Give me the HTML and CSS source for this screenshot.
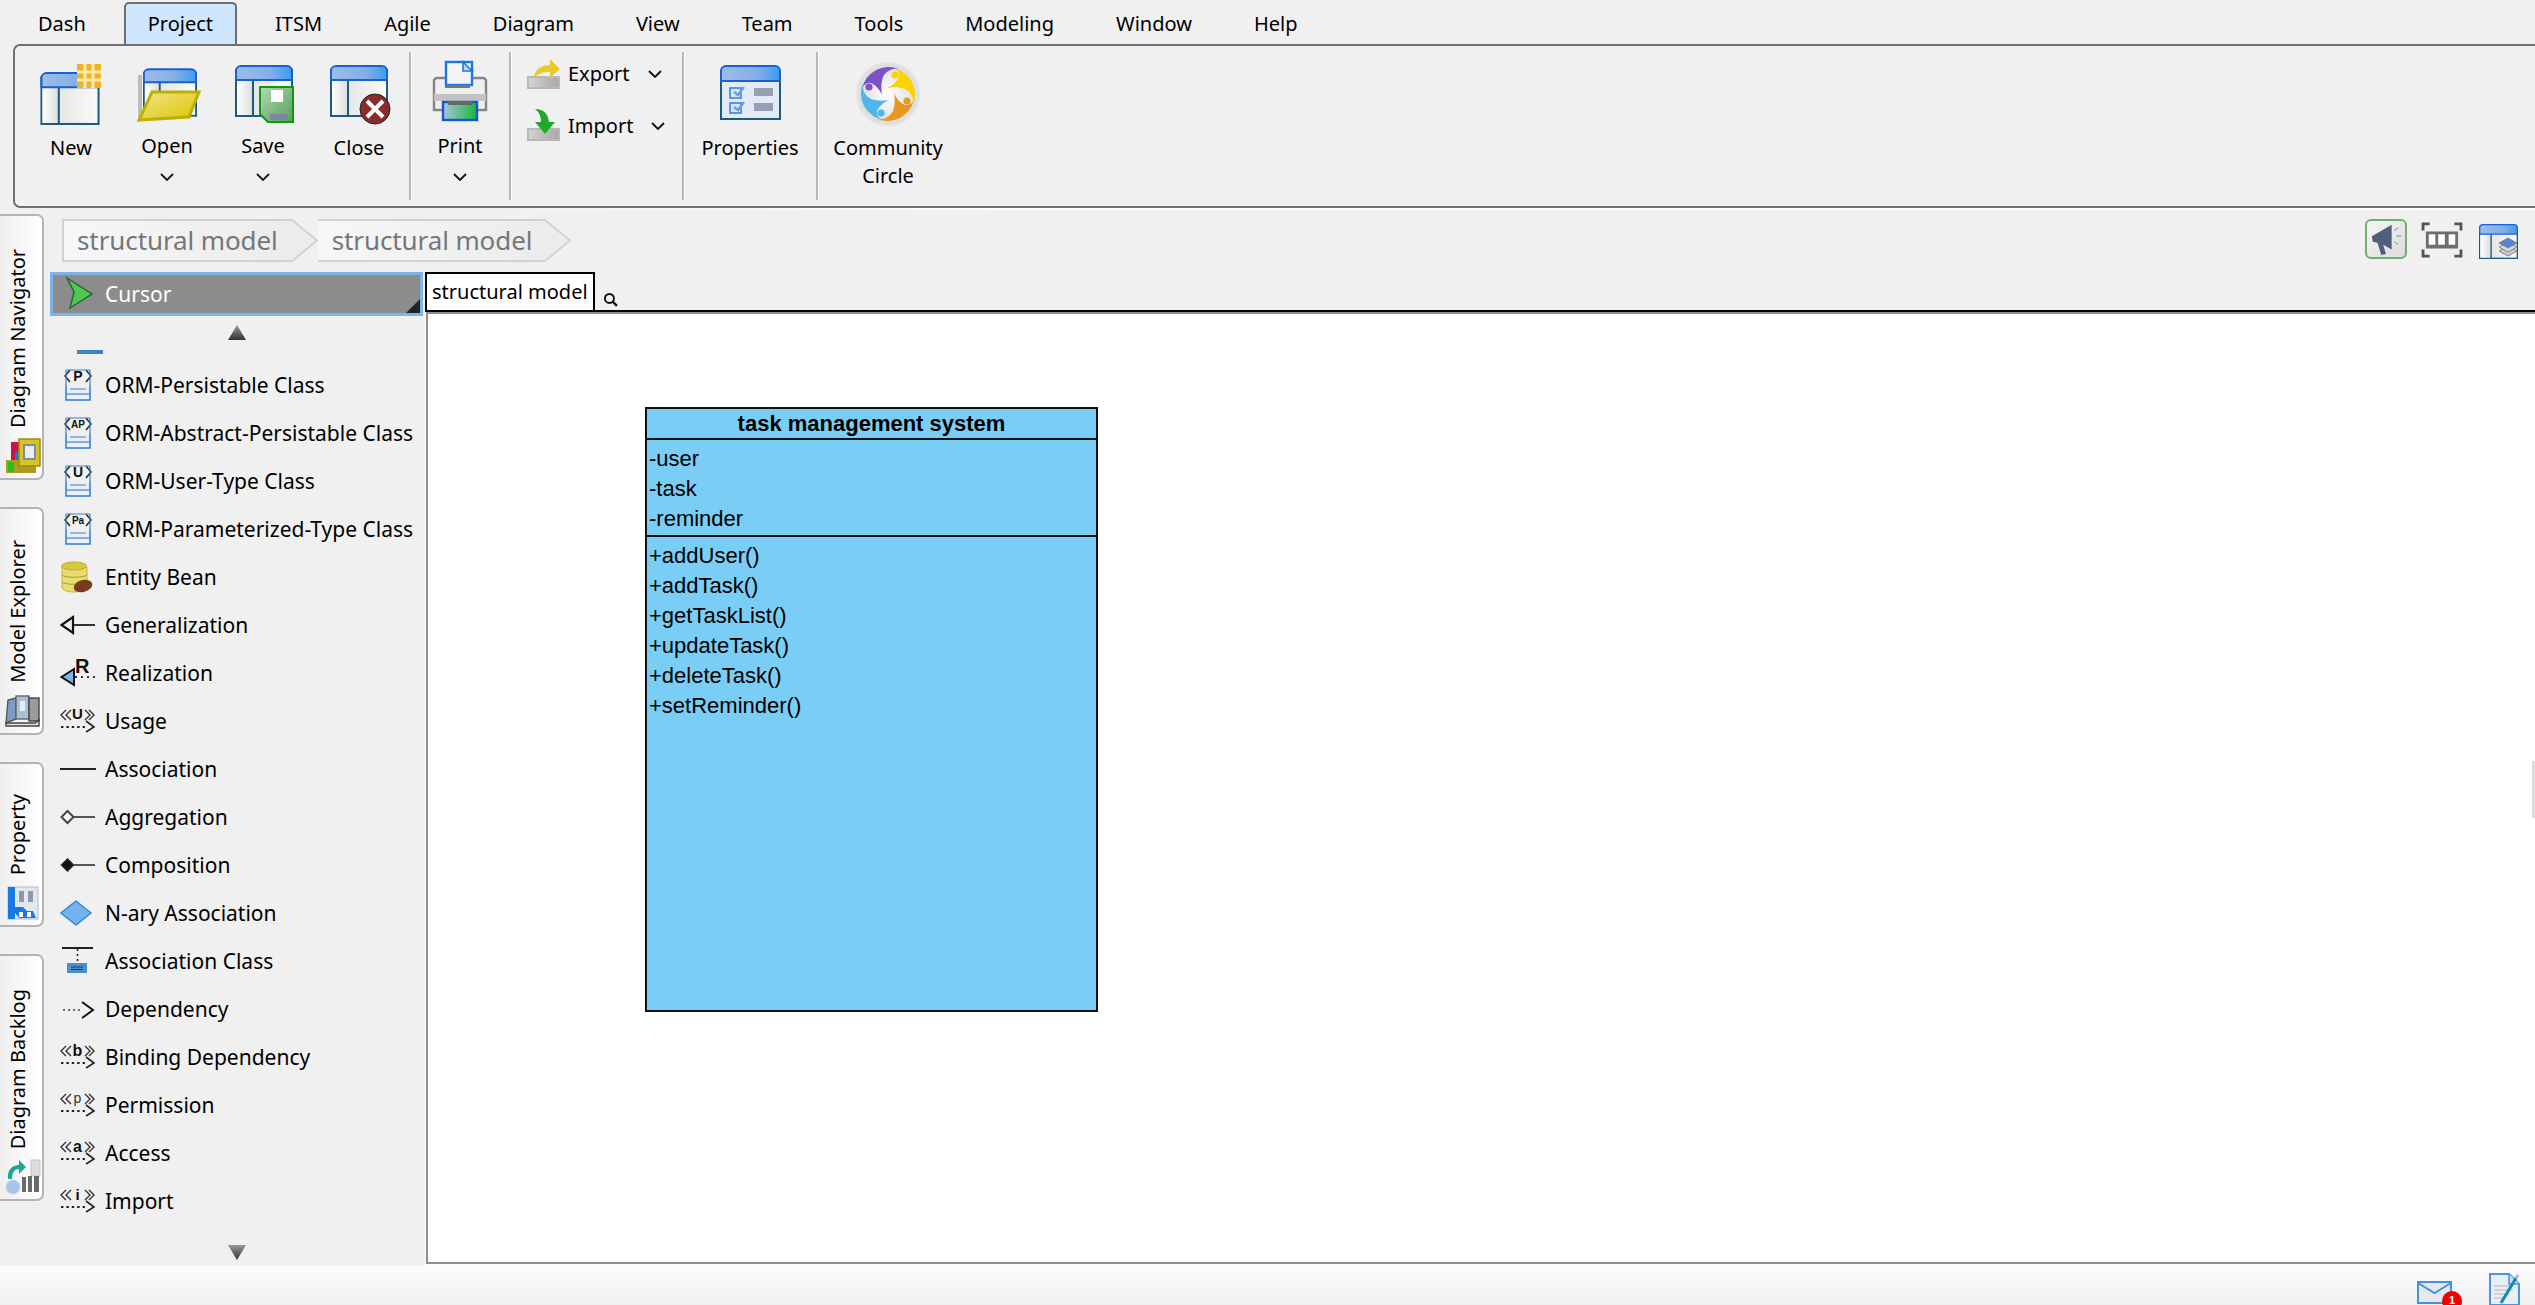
FILE: index.html
```html
<!DOCTYPE html>
<html lang="en">
<head>
    <meta charset="UTF-8">
    <title>structural model</title>
    <link rel="stylesheet" href="styles.css">
</head>
<body>
    <!-- shared gradients and the window glyph -->
    <svg class="defs" width="0" height="0">
        <defs>
            <linearGradient id="g-head" x1="0" x2="1" y1="0" y2="0"><stop offset="0" stop-color="#9dbce6"/><stop offset="0.6" stop-color="#84b0e6"/><stop offset="1" stop-color="#3c9cf0"/></linearGradient>
            <linearGradient id="g-pane" x1="0" x2="1" y1="0" y2="0"><stop offset="0" stop-color="#fff"/><stop offset="1" stop-color="#dedede"/></linearGradient>
            <linearGradient id="g-pane2" x1="0" x2="1" y1="0" y2="0"><stop offset="0" stop-color="#dcdcdc"/><stop offset="1" stop-color="#fbfbfb"/></linearGradient>
            <linearGradient id="g-folder" x1="0" x2="1" y1="0" y2="1"><stop offset="0" stop-color="#f0e688"/><stop offset="1" stop-color="#dcc400"/></linearGradient>
            <linearGradient id="g-disk" x1="0" x2="1" y1="0" y2="1"><stop offset="0" stop-color="#b6d6b6"/><stop offset="1" stop-color="#55a055"/></linearGradient>
            <linearGradient id="g-tray" x1="0" x2="1" y1="0" y2="0"><stop offset="0" stop-color="#a8c4e0"/><stop offset="1" stop-color="#18b830"/></linearGradient>
            <linearGradient id="g-bar" x1="0" x2="1" y1="0" y2="0"><stop offset="0" stop-color="#d4d4d4"/><stop offset="1" stop-color="#a8a8a8"/></linearGradient>
            <linearGradient id="g-up" x1="0" x2="0" y1="0" y2="1"><stop offset="0" stop-color="#999"/><stop offset="1" stop-color="#333"/></linearGradient>
            <radialGradient id="g-swirl"><stop offset="0" stop-color="#fff"/><stop offset="1" stop-color="#dcdcdc"/></radialGradient>
            <symbol id="win" viewBox="0 0 58 52">
                <rect x="1" y="5" width="56" height="46" fill="url(#g-pane2)" stroke="#1c5b7c" stroke-width="2"/>
                <rect x="2" y="14" width="15" height="36" fill="url(#g-pane)"/>
                <path d="M18 14V51" stroke="#1c5b7c" stroke-width="2"/>
                <path d="M1 15V6a5 5 0 0 1 5-5H52a5 5 0 0 1 5 5V15Z" fill="url(#g-head)" stroke="#1a5fd6" stroke-width="2"/>
            </symbol>
            <symbol id="dep" viewBox="0 0 36 36">
                <path d="M6 7 1 12l5 5M11 7 6 12l5 5M25 7l5 5-5 5M29 7l5 5-5 5" fill="none" stroke="#333" stroke-width="1.4"/>
                <path d="M1 24H28" stroke="#222" stroke-width="2" stroke-dasharray="2.4 3"/>
                <path d="M26 18l8 6-8 5" fill="none" stroke="#222" stroke-width="1.6"/>
            </symbol>
            <symbol id="orm" viewBox="0 0 36 36">
                <rect x="6" y="3" width="24" height="30" fill="#e6effa" stroke="#3f82cc" stroke-width="1.6"/>
                <rect x="3" y="1" width="30" height="17" fill="#f0f0f0"/>
                <path d="M10 22H26" stroke="#8fa4ba" stroke-width="1.6"/>
                <path d="M6 27H30" stroke="#3f82cc" stroke-width="1.2"/>
                <path d="M10 3 5 9l5 6M26 3l5 6-5 6" fill="none" stroke="#222" stroke-width="1.5"/>
                <path d="M6 3H30M6 3V18M30 3V18" fill="none" stroke="#3f82cc" stroke-width="1.2"/>
            </symbol>
            <symbol id="blade" viewBox="0 0 64 64">
                <path d="M6 27A27 27 0 0 1 43 7C36 6 30 9 27 15 25 21 25 27 26 33 23 26 19 23 15 21A8 8 0 0 0 6 27Z"/>
                <circle cx="13" cy="25" r="3.6"/>
            </symbol>
        </defs>
    </svg>

    <nav class="menu">
        <span class="menu-item">Dash</span>
        <span class="menu-item menu-item-on">Project</span>
        <span class="menu-item">ITSM</span>
        <span class="menu-item">Agile</span>
        <span class="menu-item">Diagram</span>
        <span class="menu-item">View</span>
        <span class="menu-item">Team</span>
        <span class="menu-item">Tools</span>
        <span class="menu-item">Modeling</span>
        <span class="menu-item">Window</span>
        <span class="menu-item">Help</span>
    </nav>

    <section class="ribbon">
        <div class="rbtn">
            <svg class="rico" viewBox="0 0 70 66">
                <use href="#win" x="4" y="12" width="60" height="53"/>
                <rect x="41" y="4" width="24" height="24" fill="#efb226"/>
                <path d="M49 4V28M57 4V28M41 12H65M41 20H65" stroke="#fbe9a8" stroke-width="3"/>
            </svg>
            <span class="rlabel">New</span>
        </div>
        <div class="rbtn rbtn-drop">
            <svg class="rico" viewBox="0 0 70 66">
                <rect x="6" y="15" width="4" height="42" fill="#bdbdbd"/>
                <use href="#win" x="11" y="8" width="54" height="49"/>
                <path d="M20 32H67L57 57 7 60Z" fill="url(#g-folder)" stroke="#bcb000" stroke-width="3"/>
            </svg>
            <span class="rlabel">Open</span>
            <svg class="chev" viewBox="0 0 14 8"><path d="M1 1l6 6 6-6" fill="none" stroke="#111" stroke-width="1.8"/></svg>
        </div>
        <div class="rbtn rbtn-drop">
            <svg class="rico" viewBox="0 0 70 66">
                <use href="#win" x="7" y="5" width="58" height="52"/>
                <path d="M32 27H65V62H40L32 54Z" fill="url(#g-disk)" stroke="#0e9a0e" stroke-width="2"/>
                <rect x="43" y="30" width="12" height="12" fill="#fff"/>
                <rect x="42" y="54" width="18" height="6" fill="#7b86a0"/>
            </svg>
            <span class="rlabel">Save</span>
            <svg class="chev" viewBox="0 0 14 8"><path d="M1 1l6 6 6-6" fill="none" stroke="#111" stroke-width="1.8"/></svg>
        </div>
        <div class="rbtn">
            <svg class="rico" viewBox="0 0 70 66">
                <use href="#win" x="6" y="5" width="58" height="52"/>
                <circle cx="51" cy="49" r="15" fill="#8a2c2c" stroke="#222" stroke-width="1"/>
                <path d="M43 41l16 16M59 41 43 57" stroke="#fff" stroke-width="4"/>
            </svg>
            <span class="rlabel">Close</span>
        </div>
        <i class="rsep rsep-first"></i>
        <div class="rbtn rbtn-drop rbtn-print">
            <svg class="rico" viewBox="0 0 70 66">
                <path d="M12 18H58a3 3 0 0 1 3 3V50H9V21a3 3 0 0 1 3-3Z" fill="#efefef" stroke="#858585" stroke-width="2.4"/>
                <rect x="9" y="34" width="52" height="7" fill="#c2c2c2"/>
                <rect x="21" y="2" width="26" height="23" fill="#f4f4f4" stroke="#1a78e0" stroke-width="2.4"/>
                <path d="M38 2l9 9H38Z" fill="#bcd8f6" stroke="#1a78e0" stroke-width="1.6"/>
                <rect x="20" y="25" width="25" height="3" fill="#777"/>
                <rect x="18" y="42" width="34" height="18" fill="url(#g-tray)" stroke="#1458d8" stroke-width="2.4"/>
                <rect x="23" y="41" width="24" height="4" fill="#666"/>
            </svg>
            <span class="rlabel">Print</span>
            <svg class="chev" viewBox="0 0 14 8"><path d="M1 1l6 6 6-6" fill="none" stroke="#111" stroke-width="1.8"/></svg>
        </div>
        <i class="rsep"></i>
        <div class="rstack">
            <div class="rrow">
                <svg class="rsmall" viewBox="0 0 34 36">
                    <rect x="1" y="21" width="31" height="11" fill="url(#g-bar)" stroke="#b8b8b8" stroke-width="2"/>
                    <path d="M7 21C8 13 15 9 23 9V3l10 10-10 9v-6c-6 0-11 1-16 5Z" fill="#e8cb28"/>
                </svg>
                <span>Export</span>
                <svg class="chev chev-row" viewBox="0 0 14 8"><path d="M1 1l6 6 6-6" fill="none" stroke="#111" stroke-width="1.8"/></svg>
            </div>
            <div class="rrow rrow-import">
                <svg class="rsmall" viewBox="0 0 34 36">
                    <rect x="1" y="21" width="31" height="11" fill="url(#g-bar)" stroke="#b8b8b8" stroke-width="2"/>
                    <path d="M8 1c9 0 13 5 14 13h6L18 26 8 14h6C14 8 12 4 8 1Z" fill="#1fa82a"/>
                </svg>
                <span>Import</span>
                <svg class="chev chev-row" viewBox="0 0 14 8"><path d="M1 1l6 6 6-6" fill="none" stroke="#111" stroke-width="1.8"/></svg>
            </div>
        </div>
        <i class="rsep"></i>
        <div class="rbtn rbtn-props">
            <svg class="rico" viewBox="0 0 70 66">
                <rect x="6" y="12" width="59" height="47" fill="#e2eaf6" stroke="#1c5b7c" stroke-width="2"/>
                <path d="M6 21V11a5 5 0 0 1 5-5H60a5 5 0 0 1 5 5V21Z" fill="url(#g-head)" stroke="#1a5fd6" stroke-width="2"/>
                <rect x="15" y="28" width="11" height="10" fill="#d6e4f6" stroke="#3f82d8" stroke-width="1.6"/>
                <rect x="15" y="43" width="11" height="10" fill="#d6e4f6" stroke="#3f82d8" stroke-width="1.6"/>
                <path d="M19 32l4 3 6-8M19 47l4 3 6-8" fill="none" stroke="#6f9fd8" stroke-width="2.4"/>
                <rect x="39" y="28" width="19" height="8" fill="#979fb3"/>
                <rect x="39" y="43" width="19" height="8" fill="#979fb3"/>
            </svg>
            <span class="rlabel">Properties</span>
        </div>
        <i class="rsep"></i>
        <div class="rbtn rbtn-circle">
            <svg class="rico" viewBox="0 0 70 66">
                <circle cx="35" cy="34" r="31" fill="url(#g-swirl)" stroke="#e4e4e4" stroke-width="2"/>
                <g transform="translate(3 2)">
                    <use href="#blade" width="64" height="64" fill="#7d52c9"/>
                    <use href="#blade" width="64" height="64" fill="#fbd300" transform="rotate(90 32 32)"/>
                    <use href="#blade" width="64" height="64" fill="#e7981f" transform="rotate(180 32 32)"/>
                    <use href="#blade" width="64" height="64" fill="#4fb5ea" transform="rotate(270 32 32)"/>
                </g>
            </svg>
            <span class="rlabel">Community<br>Circle</span>
        </div>
    </section>

    <div class="main">
        <aside class="rail">
            <div class="rail-tab rail-nav">
                <span class="rail-text">Diagram Navigator</span>
                <svg class="rail-ico" viewBox="0 0 36 36">
                    <rect x="6" y="4" width="12" height="24" fill="#d0104c"/>
                    <rect x="10" y="14" width="12" height="14" fill="#0c7ed0"/>
                    <rect x="1" y="22" width="30" height="13" fill="#b09a20"/>
                    <rect x="3" y="24" width="6" height="10" fill="#22c020"/>
                    <rect x="14" y="1" width="21" height="27" fill="#d8c428" stroke="#9c8a10" stroke-width="1.5"/>
                    <rect x="19" y="7" width="11" height="14" fill="#eeeeee" stroke="#7a8eaa" stroke-width="2"/>
                </svg>
            </div>
            <div class="rail-tab rail-model">
                <span class="rail-text">Model Explorer</span>
                <svg class="rail-ico" viewBox="0 0 36 36">
                    <path d="M1 30 3 7l8-2V26Z" fill="#7d9cc0" stroke="#555" stroke-width="1.4"/>
                    <rect x="11" y="3" width="13" height="23" fill="#a9c0dc" stroke="#666" stroke-width="1.4"/>
                    <rect x="15" y="8" width="5" height="10" fill="#e8eef4"/>
                    <rect x="24" y="5" width="10" height="23" fill="#9a9a9a" stroke="#444" stroke-width="1.4"/>
                    <path d="M1 30H30l4-3V33H1Z" fill="#e2e2e2" stroke="#444" stroke-width="1.4"/>
                </svg>
            </div>
            <div class="rail-tab rail-prop">
                <span class="rail-text">Property</span>
                <svg class="rail-ico" viewBox="0 0 36 36">
                    <rect x="3" y="2" width="30" height="32" fill="#dfe7ef" stroke="#b4bcc4"/>
                    <rect x="3" y="2" width="7" height="32" fill="#1a78e0"/>
                    <rect x="14" y="6" width="5" height="11" fill="#8e98a8"/>
                    <rect x="23" y="6" width="5" height="11" fill="#8e98a8"/>
                    <path d="M10 22h8l4 4h6l3 7H14l-4-5Z" fill="#1a78e0"/>
                    <rect x="14" y="27" width="4" height="5" fill="#fff"/>
                    <rect x="22" y="27" width="4" height="5" fill="#fff"/>
                </svg>
            </div>
            <div class="rail-tab rail-backlog">
                <span class="rail-text">Diagram Backlog</span>
                <svg class="rail-ico" viewBox="0 0 36 36">
                    <rect x="26" y="1" width="9" height="16" fill="#dcdcdc" stroke="#c4c4c4"/>
                    <path d="M3 20C2 11 7 6 14 6V1l7 7-7 7v-5c-4 0-7 3-7 10Z" fill="#1fa890"/>
                    <circle cx="8" cy="28" r="7" fill="#a8c4ea" stroke="#c4d6ee"/>
                    <path d="M17 18h4V33H17ZM23 17h4V33H23ZM29 17h5V33H29Z" fill="#6a6a6a"/>
                </svg>
            </div>
        </aside>

        <div class="work">
            <div class="topline">
                <div class="crumbs">
                    <span class="crumb crumb-first">structural model</span>
                    <svg class="crumb-tip" viewBox="0 0 26 43"><path d="M0 1 25 21.5 0 42Z" fill="#ececec"/><path d="M0 1 25 21.5 0 42" fill="none" stroke="#ced2d5" stroke-width="2"/></svg>
                    <span class="crumb">structural model</span>
                    <svg class="crumb-tip" viewBox="0 0 26 43"><path d="M0 1 25 21.5 0 42Z" fill="#ececec"/><path d="M0 1 25 21.5 0 42" fill="none" stroke="#ced2d5" stroke-width="2"/></svg>
                </div>
                <div class="tools">
                    <div class="tool-on">
                        <svg class="tool-ico" viewBox="0 0 36 36">
                            <path d="M3 15 24 3V29L15 24l3 10-5 1-4-13-5-1Z" fill="#4f607e"/>
                            <path d="M27 9l4-3M29 15h5M27 21l4 3" stroke="#8e98a8" stroke-width="1.2"/>
                        </svg>
                    </div>
                    <svg class="tool-fit" viewBox="0 0 44 38">
                        <path d="M2 9V2H9M35 2h7V9M2 29v7H9M35 36h7V29" fill="none" stroke="#555" stroke-width="3"/>
                        <rect x="5" y="10" width="34" height="18" fill="#6e6e6e"/>
                        <rect x="8" y="13" width="7" height="11" fill="#fff"/>
                        <rect x="18" y="13" width="7" height="11" fill="#fff"/>
                        <rect x="29" y="13" width="7" height="11" fill="#fff"/>
                    </svg>
                    <svg class="tool-layers" viewBox="0 0 40 38">
                        <use href="#win" width="39" height="35"/>
                        <path d="M20 27l9-5 9 5-9 5Z" fill="#c8c8c8" stroke="#888"/>
                        <path d="M20 23l9-5 9 5-9 5Z" fill="#d8d8d8" stroke="#888"/>
                        <path d="M20 19l9-5 9 5-9 5Z" fill="#4f86d8" stroke="#888"/>
                    </svg>
                </div>
            </div>

            <div class="body">
                <div class="palette">
                    <div class="cursor">
                        <svg class="pal-ico" viewBox="0 0 36 36"><path d="M7 2 32 18 10 32 14 16Z" fill="#4dc94d" stroke="#2d5c3a" stroke-width="1.4"/></svg>
                        <span>Cursor</span>
                        <i class="cursor-corner"></i>
                    </div>
                    <div class="pal-up">
                        <svg class="pal-arrow" viewBox="0 0 18 15"><path d="M9 0 18 15H0Z" fill="url(#g-up)"/></svg>
                        <i class="pal-cut"></i>
                    </div>
                    <ul class="pal-list">
                        <li><svg class="pal-ico" viewBox="0 0 36 36"><use href="#orm"/><text class="ic-b" x="18" y="14" font-size="14" text-anchor="middle">P</text></svg>ORM-Persistable Class</li>
                        <li><svg class="pal-ico" viewBox="0 0 36 36"><use href="#orm"/><text class="ic-b" x="18" y="13" font-size="10" text-anchor="middle">AP</text></svg>ORM-Abstract-Persistable Class</li>
                        <li><svg class="pal-ico" viewBox="0 0 36 36"><use href="#orm"/><text class="ic-b" x="18" y="14" font-size="14" text-anchor="middle">U</text></svg>ORM-User-Type Class</li>
                        <li><svg class="pal-ico" viewBox="0 0 36 36"><use href="#orm"/><text class="ic-b" x="18" y="13" font-size="10" text-anchor="middle">Pa</text></svg>ORM-Parameterized-Type Class</li>
                        <li><svg class="pal-ico" viewBox="0 0 36 36">
                            <path d="M2 8V28c0 3 5 5 12 5s13-2 13-5V8Z" fill="#e8dc70" stroke="#c4b838"/>
                            <ellipse cx="14" cy="7" rx="12.500" ry="4" fill="#d8c840" stroke="#b8ac30"/>
                            <path d="M2 16c2 3 22 3 25 0M2 23c2 3 22 3 25 0" fill="none" stroke="#a89c28"/>
                            <ellipse cx="23" cy="27" rx="9.500" ry="6" fill="#7a3a1c" transform="rotate(-15 23 27)"/>
                        </svg>Entity Bean</li>
                        <li><svg class="pal-ico" viewBox="0 0 36 36"><path d="M13 18H35" stroke="#333" stroke-width="2"/><path d="M1.500 18 13 10V26Z" fill="#f0f0f0" stroke="#111" stroke-width="2.200"/></svg>Generalization</li>
                        <li><svg class="pal-ico" viewBox="0 0 36 36"><path d="M15 22H35" stroke="#333" stroke-width="1.800" stroke-dasharray="2 4"/><path d="M1.500 22 14 14V30Z" fill="#7ab6ea" stroke="#111" stroke-width="2"/><text class="ic-b" x="15" y="18" font-size="20">R</text></svg>Realization</li>
                        <li><svg class="pal-ico" viewBox="0 0 36 36"><use href="#dep"/><text class="ic-b" x="17.500" y="16" font-size="15" text-anchor="middle">U</text></svg>Usage</li>
                        <li><svg class="pal-ico" viewBox="0 0 36 36"><path d="M0 18H36" stroke="#222" stroke-width="2"/></svg>Association</li>
                        <li><svg class="pal-ico" viewBox="0 0 36 36"><path d="M14 18H35" stroke="#444" stroke-width="1.800"/><path d="M7.500 12 13.500 18 7.500 24 1.500 18Z" fill="#fafafa" stroke="#444" stroke-width="2"/></svg>Aggregation</li>
                        <li><svg class="pal-ico" viewBox="0 0 36 36"><path d="M14 18H35" stroke="#444" stroke-width="1.800"/><path d="M7.500 12 13.500 18 7.500 24 1.500 18Z" fill="#111" stroke="#222" stroke-width="1.500"/></svg>Composition</li>
                        <li><svg class="pal-ico" viewBox="0 0 36 36"><path d="M16 6 31 18 16 30 1 18Z" fill="#73b4ef" stroke="#3a8bd6" stroke-width="1.500"/></svg>N-ary Association</li>
                        <li><svg class="pal-ico" viewBox="0 0 36 36"><path d="M2 5H33" stroke="#222" stroke-width="2"/><path d="M17.500 6V20" stroke="#222" stroke-width="1.500" stroke-dasharray="2 3"/><rect x="7" y="20" width="20" height="10" fill="#4a90d0"/><path d="M11 24H23M11 26.500H23" stroke="#1e3c5c"/></svg>Association Class</li>
                        <li><svg class="pal-ico" viewBox="0 0 36 36"><path d="M3 19H22" stroke="#444" stroke-width="1.600" stroke-dasharray="2 3"/><path d="M22 11 33 19 22 27" fill="none" stroke="#111" stroke-width="2"/></svg>Dependency</li>
                        <li><svg class="pal-ico" viewBox="0 0 36 36"><use href="#dep"/><text class="ic-b" x="17.500" y="17" font-size="16" text-anchor="middle">b</text></svg>Binding Dependency</li>
                        <li><svg class="pal-ico" viewBox="0 0 36 36"><use href="#dep"/><text class="ic-n" x="17.500" y="16" font-size="14" text-anchor="middle">p</text></svg>Permission</li>
                        <li><svg class="pal-ico" viewBox="0 0 36 36"><use href="#dep"/><text class="ic-b" x="17.500" y="17" font-size="16" text-anchor="middle">a</text></svg>Access</li>
                        <li><svg class="pal-ico" viewBox="0 0 36 36"><use href="#dep"/><text class="ic-b" x="17.500" y="17" font-size="15" text-anchor="middle">i</text></svg>Import</li>
                    </ul>
                    <div class="pal-down">
                        <svg class="pal-arrow" viewBox="0 0 18 15"><path d="M0 0H18L9 15Z" fill="url(#g-up)"/></svg>
                    </div>
                </div>

                <div class="stage">
                    <div class="tabbar">
                        <span class="dtab">structural model</span>
                        <svg class="lens" viewBox="0 0 14 14"><circle cx="6" cy="6" r="4.200" fill="none" stroke="#111" stroke-width="1.800"/><path d="M9 9l4 4" stroke="#111" stroke-width="2.200"/></svg>
                    </div>
                    <div class="canvas">
                        <div class="uml">
                            <div class="uml-name">task management system</div>
                            <div class="uml-attrs">
                                <div>-user</div>
                                <div>-task</div>
                                <div>-reminder</div>
                            </div>
                            <div class="uml-ops">
                                <div>+addUser()</div>
                                <div>+addTask()</div>
                                <div>+getTaskList()</div>
                                <div>+updateTask()</div>
                                <div>+deleteTask()</div>
                                <div>+setReminder()</div>
                            </div>
                        </div>
                        <i class="handle"></i>
                    </div>
                </div>
            </div>
        </div>
    </div>

    <footer class="status">
        <div class="mail">
            <svg class="mail-ico" viewBox="0 0 46 30">
                <rect x="1" y="1" width="33" height="21" fill="#e6e8ea" stroke="#3f92e0" stroke-width="2"/>
                <path d="M1 2 17.500 12 34 2" fill="none" stroke="#3f92e0" stroke-width="2"/>
                <circle cx="35" cy="20" r="10" fill="#f00000"/>
                <text class="ic-w" x="35" y="23" font-size="11" text-anchor="middle">1</text>
            </svg>
        </div>
        <svg class="note-ico" viewBox="0 0 32 32">
            <path d="M1 1H20L30 11V32H1Z" fill="#e8eef4" stroke="#4a94dc" stroke-width="2"/>
            <path d="M20 1V11H30" fill="#cfe0f2" stroke="#4a94dc" stroke-width="1.500"/>
            <path d="M5 13H24M5 17H24M5 21H20M5 25H16" stroke="#b4b4b4" stroke-width="1.200"/>
            <path d="M12 30 27 5" stroke="#1488b0" stroke-width="3"/>
            <path d="M27 5 29 2" stroke="#d4a8a8" stroke-width="3"/>
        </svg>
    </footer>
</body>
</html>
```

FILE: styles.css
```css
* {
    box-sizing: border-box;
}
html, body {
    margin: 0;
    height: 100%;
}
body {
    width: 2535px;
    height: 1305px;
    overflow: hidden;
    display: flex;
    flex-direction: column;
    background-color: #f0f0f0;
    color: #000;
    font-family: "Noto Sans", "Open Sans", sans-serif;
    font-size: 21px;
}
i {
    display: block;
}
.defs {
    display: block;
    flex: none;
}

/* menu bar */
.menu {
    flex: none;
    height: 44px;
    display: flex;
    gap: 14px;
    padding-left: 14px;
    padding-top: 2px;
    font-size: 20px;
}
.menu-item {
    padding: 0 22px;
    line-height: 40px;
    border: 2px solid transparent;
    border-bottom: none;
    white-space: nowrap;
}
.menu-item-on {
    background-color: #cfe6fc;
    border-color: #6e6e6e;
    border-radius: 5px 5px 0 0;
}

/* ribbon */
.ribbon {
    flex: none;
    height: 164px;
    margin-left: 13px;
    padding: 6px 0 6px 8px;
    display: flex;
    border: 2px solid #707070;
    border-right: none;
    border-radius: 7px 0 0 7px;
    font-size: 20px;
    line-height: 28px;
}
.rsep {
    flex: none;
    width: 2px;
    background-color: #b8b8b8;
    box-shadow: 1px 0 0 #fff;
}
.rsep-first {
    margin-left: 2px;
}
.rbtn {
    flex: none;
    width: 96px;
    padding-top: 8px;
    display: flex;
    flex-direction: column;
    align-items: center;
    text-align: center;
}
.rico {
    flex: none;
    width: 70px;
    height: 66px;
}
.rlabel {
    margin-top: 8px;
}
.rbtn-drop .rlabel {
    margin-top: 6px;
}
.rbtn-print {
    width: 98px;
}
.rbtn-props {
    width: 132px;
}
.rbtn-circle {
    width: 140px;
}
.chev {
    flex: none;
    width: 14px;
    height: 8px;
    margin-top: 13px;
}
.rstack {
    flex: none;
    width: 171px;
    padding: 4px 0 0 16px;
    display: flex;
    flex-direction: column;
    gap: 16px;
}
.rrow {
    height: 36px;
    display: flex;
    align-items: center;
    gap: 7px;
}
.rsmall {
    flex: none;
    width: 34px;
    height: 36px;
}
.chev-row {
    margin: 0 0 0 11px;
}

/* left rail */
.main {
    flex: 1;
    min-height: 0;
    display: flex;
}
.rail {
    flex: none;
    width: 44px;
    padding-top: 6px;
    display: flex;
    flex-direction: column;
    gap: 27px;
}
.rail-tab {
    padding: 0 0 4px 4px;
    display: flex;
    flex-direction: column;
    justify-content: flex-end;
    gap: 10px;
    border: 2px solid #b4b4b4;
    border-left: none;
    border-radius: 0 7px 7px 0;
    background: linear-gradient(to right, #efefef, #fff);
}
.rail-nav { height: 266px; }
.rail-model { height: 228px; }
.rail-prop { height: 165px; }
.rail-backlog { height: 247px; }
.rail-text {
    writing-mode: vertical-rl;
    transform: rotate(180deg);
    font-size: 20px;
    line-height: 28px;
    white-space: nowrap;
}
.rail-ico {
    flex: none;
    width: 36px;
    height: 36px;
    margin-left: 1px;
}

/* breadcrumb line */
.work {
    flex: 1;
    min-width: 0;
    padding-left: 6px;
    display: flex;
    flex-direction: column;
}
.topline {
    flex: none;
    height: 64px;
    padding: 9px 16px 0 12px;
    display: flex;
    justify-content: space-between;
    border-top: 2px solid;
    border-image: linear-gradient(to right, #f0f0f0 15%, #fff 40%) 1;
}
.crumbs {
    display: flex;
    height: 43px;
}
.crumb {
    padding: 0 14px;
    line-height: 38px;
    font-size: 26px;
    letter-spacing: -0.1px;
    color: #73777b;
    background: linear-gradient(to right, #f7f7f7, #ececec);
    border: 2px solid #ced2d5;
    border-width: 2px 0;
    white-space: nowrap;
}
.crumb-first {
    padding: 0 15px 0 13px;
    border-left-width: 2px;
}
.crumb-tip {
    flex: none;
    width: 25px;
    height: 43px;
}
.tools {
    display: flex;
    gap: 14px;
}
.tool-on {
    width: 42px;
    height: 40px;
    padding: 1px 0 0 2px;
    border: 2px solid #6fb16a;
    border-radius: 6px;
    background: linear-gradient(135deg, #f6f6f6, #dcdcdc);
}
.tool-ico {
    display: block;
    width: 34px;
    height: 34px;
}
.tool-fit {
    width: 42px;
    height: 36px;
    margin: 3px 2px 0 0;
}
.tool-layers {
    width: 40px;
    height: 38px;
    margin-top: 5px;
}

/* shape palette */
.body {
    flex: 1;
    min-height: 0;
    display: flex;
}
.palette {
    flex: none;
    width: 373px;
    display: flex;
    flex-direction: column;
}
.cursor {
    flex: none;
    position: relative;
    height: 44px;
    display: flex;
    align-items: center;
    gap: 9px;
    padding-left: 7px;
    background-color: #8c8c8c;
    border: 3px solid #7fb2e5;
    color: #fff;
}
.cursor-corner {
    position: absolute;
    right: 0;
    bottom: 0;
    border-style: solid;
    border-width: 0 0 14px 14px;
    border-color: transparent transparent #222 transparent;
}
.pal-ico {
    flex: none;
    width: 36px;
    height: 36px;
}
.pal-up {
    flex: none;
    height: 46px;
    padding-top: 9px;
    display: flex;
    flex-direction: column;
    align-items: center;
    justify-content: space-between;
}
.pal-arrow {
    flex: none;
    width: 18px;
    height: 15px;
}
.pal-cut {
    width: 26px;
    height: 4px;
    margin-right: 293px;
    margin-bottom: 8px;
    background-color: #3f82cc;
}
.pal-list {
    list-style: none;
    margin: 0;
    padding: 0;
}
.pal-list li {
    height: 48px;
    padding: 0 0 2px 10px;
    display: flex;
    align-items: center;
    gap: 9px;
    white-space: nowrap;
}
.pal-down {
    padding-top: 19px;
    display: flex;
    justify-content: center;
}
.ic-b {
    font-family: "Liberation Sans", sans-serif;
    font-weight: bold;
    fill: #111;
}
.ic-n {
    font-family: "Liberation Sans", sans-serif;
    fill: #333;
}
.ic-w {
    font-family: "Liberation Sans", sans-serif;
    font-weight: bold;
    fill: #fff;
}

/* diagram area */
.stage {
    flex: 1;
    min-width: 0;
    margin-left: 2px;
    display: flex;
    flex-direction: column;
    background-color: #fafafa;
}
.tabbar {
    flex: none;
    height: 40px;
    display: flex;
    border-bottom: 2px solid #000;
    background-color: #f0f0f0;
}
.dtab {
    width: 170px;
    height: 40px;
    padding-left: 5px;
    line-height: 36px;
    font-size: 20px;
    white-space: nowrap;
    background-color: #fff;
    border: 2px solid #000;
}
.lens {
    width: 15px;
    height: 15px;
    margin: 20px 0 0 8px;
}
.canvas {
    flex: 1;
    position: relative;
    margin: 0 0 2px 1px;
    background-color: #fff;
    border: 2px solid #8a8d96;
    border-width: 2px 0 2px 2px;
    overflow: hidden;
}
.uml {
    position: absolute;
    left: 217px;
    top: 93px;
    width: 453px;
    height: 605px;
    display: flex;
    flex-direction: column;
    background-color: #7acdf4;
    border: 2px solid #111;
    font-family: "Liberation Sans", sans-serif;
    font-size: 22px;
    line-height: 30px;
}
.uml-name {
    flex: none;
    height: 31px;
    text-align: center;
    font-weight: bold;
    border-bottom: 2px solid #111;
}
.uml-attrs {
    flex: none;
    height: 97px;
    padding: 4px 0 0 2px;
    border-bottom: 2px solid #111;
}
.uml-ops {
    padding: 4px 0 0 2px;
}
.handle {
    position: absolute;
    right: 0;
    top: 447px;
    width: 3px;
    height: 57px;
    background-color: #ddd;
}

/* status bar */
.status {
    flex: none;
    height: 39px;
    display: flex;
    justify-content: flex-end;
    padding-right: 14px;
    gap: 26px;
    overflow: hidden;
    background: linear-gradient(to bottom, #fcfcfc, #f0f0f0);
}
.mail {
    padding-top: 15px;
}
.mail-ico {
    display: block;
    width: 46px;
    height: 30px;
}
.note-ico {
    width: 32px;
    height: 32px;
    margin-top: 7px;
}
```
